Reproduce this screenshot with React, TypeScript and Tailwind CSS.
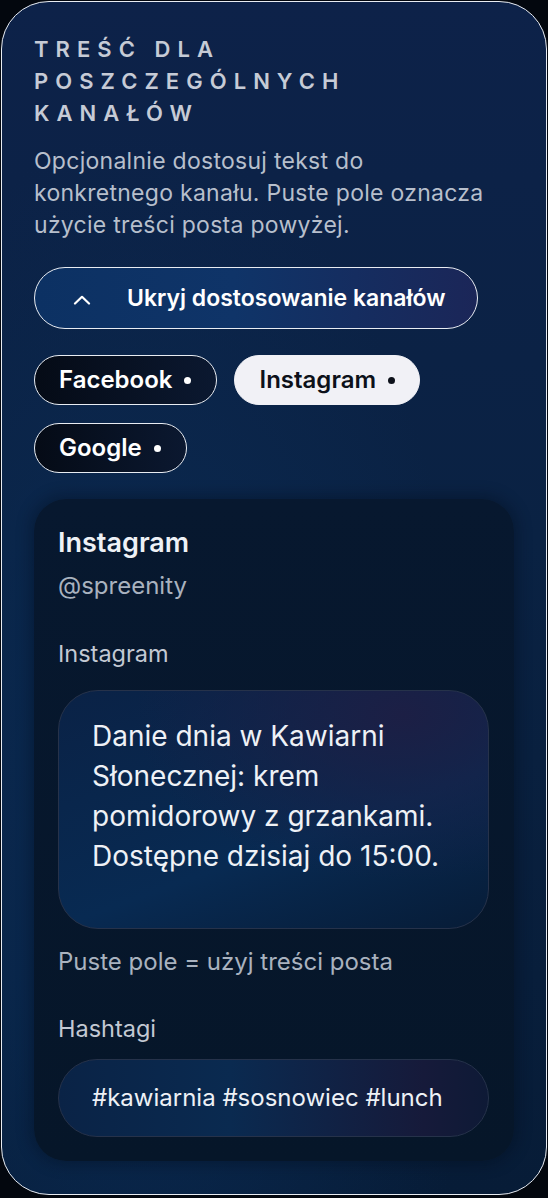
const channels = [
    { name: "Facebook", active: false },
    { name: "Instagram", active: true },
    { name: "Google", active: false },
];

function Caret() {
    return (
        <svg width="18" height="10" viewBox="0 0 18 10" fill="none" className="shrink-0 mt-[4px]">
            <polyline points="2,8.5 9,1.8 16,8.5" stroke="white" strokeWidth="2.2" strokeLinecap="round" strokeLinejoin="round" />
        </svg>
    );
}

export default function App() {
    return (
        <div className="w-[548px] h-[1198px] bg-[#03070e] pt-px px-px font-['Inter',sans-serif]">
            <div className="h-[1194px] rounded-[48px] border-[1.5px] border-[#e8ecf2] bg-[radial-gradient(ellipse_at_25%_72%,#0a2b54_0%,transparent_60%),linear-gradient(180deg,#0d2249_0%,#0a2243_45%,#071c37_100%)] px-8 pt-[31px] overflow-hidden">
                <h2 className="text-[22px] leading-[32px] font-semibold uppercase tracking-[0.32em] text-[#c6cbd6]">
                    Treść dla poszczególnych kanałów
                </h2>
                <p className="mt-4 max-w-[468px] text-[23px] leading-[32px] tracking-[0.012em] text-[#b7bfcc]">
                    Opcjonalnie dostosuj tekst do konkretnego kanału. Puste pole oznacza użycie treści posta powyżej.
                </p>

                <button className="mt-[26px] h-[62px] flex items-center gap-[36px] pl-[38px] pr-[31px] rounded-full border-[1.5px] border-[#e8ecf2] bg-[linear-gradient(90deg,#0c3163_0%,#0f3468_45%,#1b2658_100%)] text-white">
                    <Caret />
                    <span className="text-[23px] font-semibold">Ukryj dostosowanie kanałów</span>
                </button>

                <div className="mt-[26px] flex flex-wrap gap-x-[17px] gap-y-[18px] pr-10">
                    {channels.map((c) => (
                        <button
                            key={c.name}
                            className={
                                c.active
                                    ? "h-[50px] flex items-center pl-[24px] pr-[24px] rounded-full bg-[#f1f1f6] border-[1.5px] border-[#f1f1f6] text-[#0d111a] text-[24px] font-semibold"
                                    : "h-[50px] flex items-center pl-[24px] pr-[25px] rounded-full bg-[linear-gradient(90deg,#050b16_0%,#0b1830_100%)] border-[1.5px] border-[#e8ecf2] text-white text-[24px] font-semibold"
                            }
                        >
                            {c.name}
                            <span className={c.active ? "ml-[12px] w-[7px] h-[7px] rounded-full bg-[#0d111a]" : "ml-[12px] w-[7px] h-[7px] rounded-full bg-white"} />
                        </button>
                    ))}
                </div>

                <div className="mt-[26px] rounded-[32px] bg-[linear-gradient(180deg,#07182f_0%,#061629_100%)] shadow-[0_0_14px_4px_rgba(4,12,26,0.35)] pl-6 pr-[25px] pt-[27px] pb-[24px]">
                    <h3 className="text-[27px] leading-[34px] font-semibold text-[#eef1f6]">Instagram</h3>
                    <p className="mt-[10px] text-[24px] leading-[32px] text-[#a9b2bf]">@spreenity</p>

                    <label className="block mt-[36px] text-[23.5px] leading-[32px] text-[#c3c9d3]">Instagram</label>
                    <div className="mt-[20px] h-[239px] rounded-[40px] border border-[#26324a] bg-[radial-gradient(ellipse_at_80%_10%,#1c1f45_0%,transparent_55%),linear-gradient(160deg,#0a2246_0%,#082a52_60%,#071c37_100%)] pl-[33px] pr-6 pt-[25px]">
                        <p className="text-[28px] leading-[40px] text-[#eef1f6]">
                            Danie dnia w Kawiarni Słonecznej: krem pomidorowy z grzankami. Dostępne dzisiaj do 15:00.
                        </p>
                    </div>
                    <p className="mt-[17px] text-[24px] leading-[32px] text-[#a9b2bf]">Puste pole = użyj treści posta</p>

                    <label className="block mt-[35px] text-[23.5px] leading-[32px] text-[#c3c9d3]">Hashtagi</label>
                    <div className="mt-[14px] h-[78px] flex items-center rounded-full border border-[#26324a] bg-[linear-gradient(90deg,#0a2346_0%,#0a2a50_40%,#161a3a_85%,#0e1a36_100%)] pl-[33px] pr-6">
                        <span className="text-[24px] text-[#eef1f6]">#kawiarnia #sosnowiec #lunch</span>
                    </div>
                </div>
            </div>
        </div>
    );
}
